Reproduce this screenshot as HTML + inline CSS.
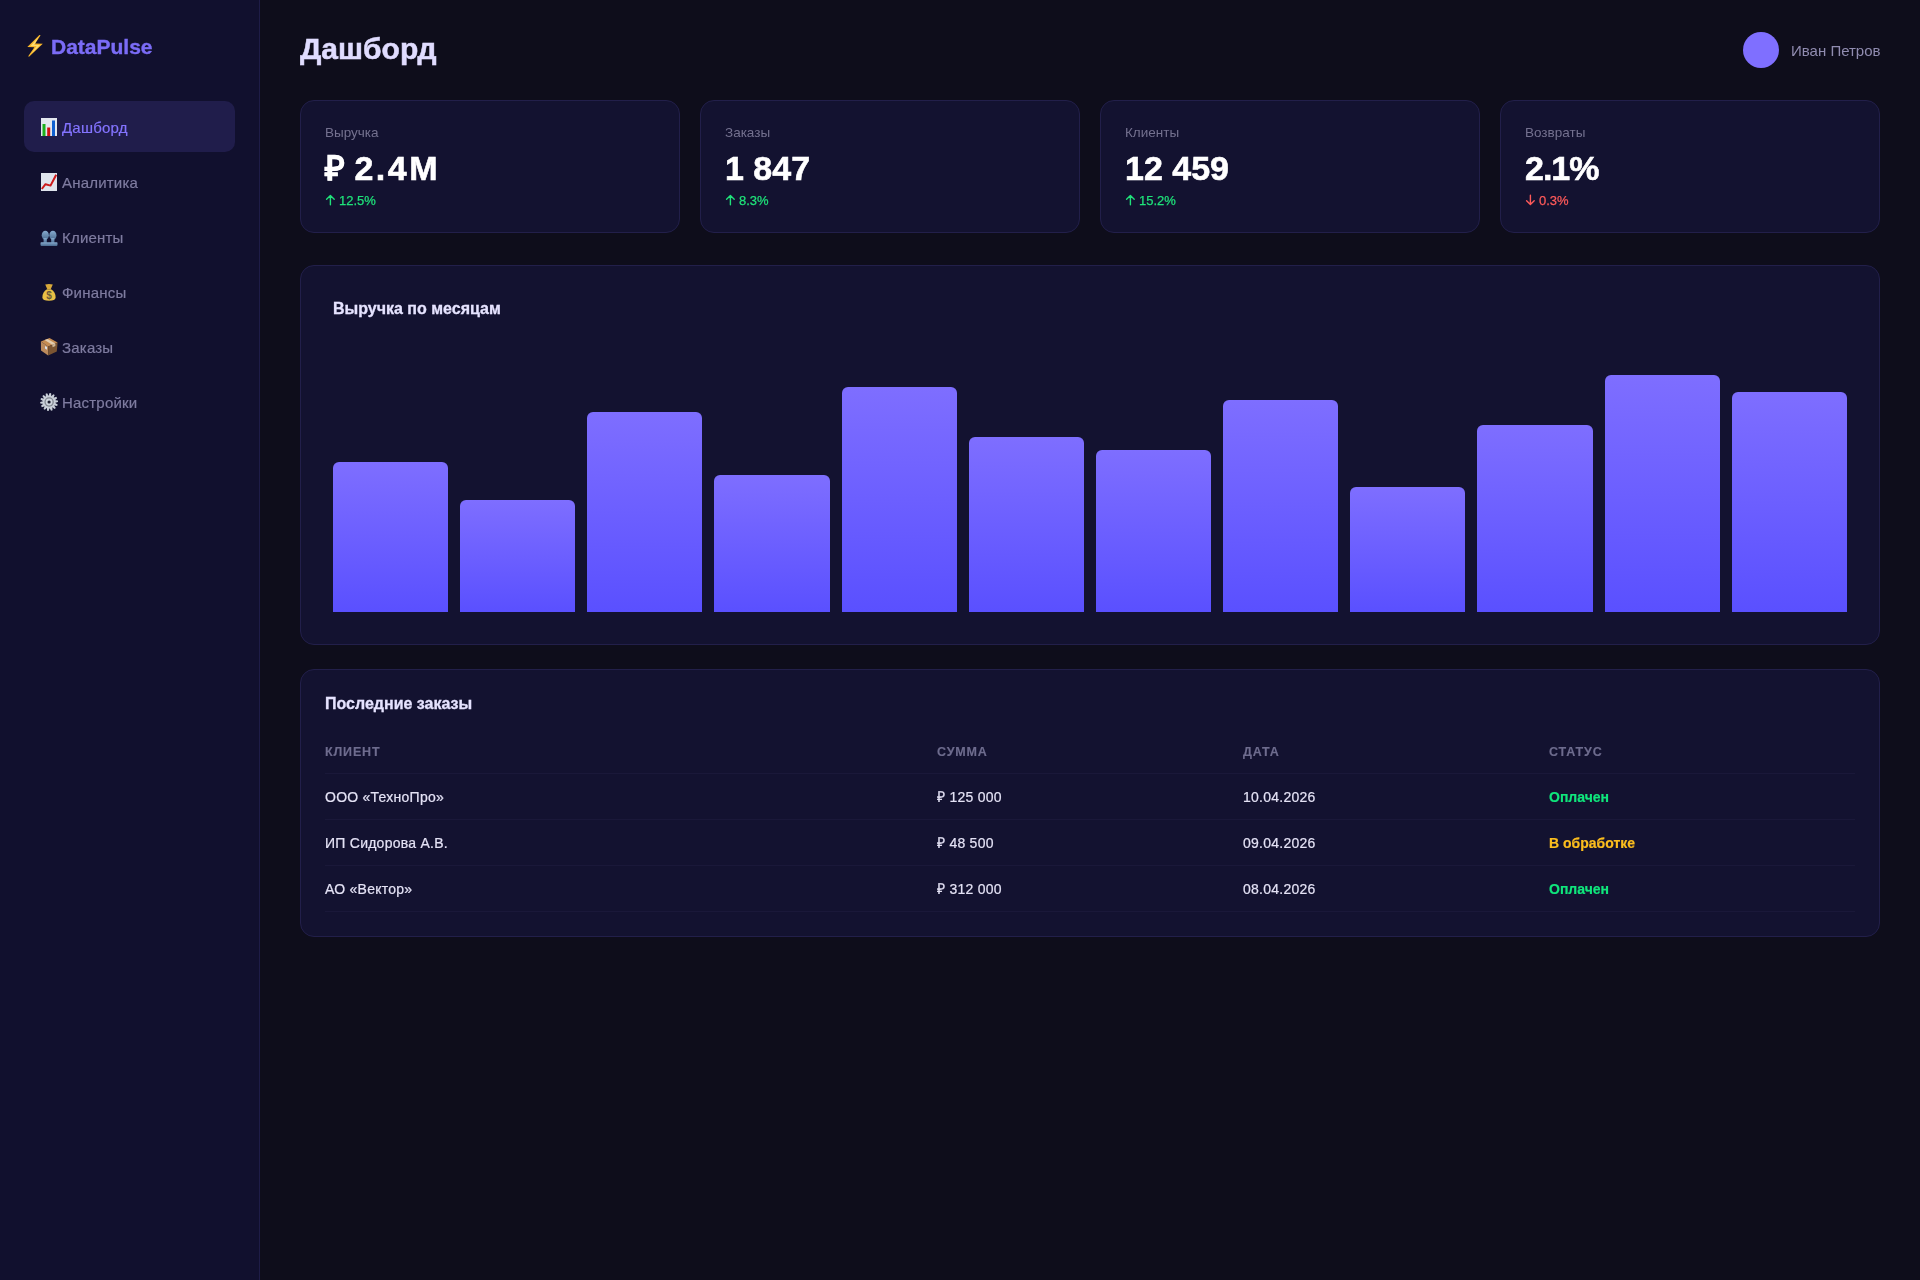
<!DOCTYPE html>
<html lang="ru">
<head>
<meta charset="utf-8">
<style>
*{box-sizing:border-box;margin:0;padding:0}
html,body{width:1920px;height:1280px;overflow:hidden}
body{background:#0e0d1b;font-family:"Liberation Sans",sans-serif;color:#e4e2f5;position:relative}
.t{position:absolute;white-space:nowrap;line-height:1;will-change:transform}
.sidebar{position:absolute;left:0;top:0;width:260px;height:1280px;background:#11102e;border-right:1px solid #1e1c47}
.active{position:absolute;left:24px;top:101px;width:211px;height:51px;border-radius:10px;background:#201d4b}
.nav{font-size:15px;color:#7f7ca0;left:62px;letter-spacing:0.2px;-webkit-text-stroke:0.2px #7f7ca0}
.ico{position:absolute}
.card{position:absolute;background:#131230;border:1px solid #221f4a;border-radius:14px}
.stat{top:100px;width:380px;height:133px}
.lbl{font-size:13.5px;color:#74718f;left:24px;top:25.4px}
.val{font-size:34px;font-weight:bold;color:#fff;-webkit-text-stroke:0.6px #fff;left:24px;top:50.2px}
.chg{font-size:13px;color:#1fe27a;-webkit-text-stroke:0.25px #1fe27a;left:37.5px;top:92.6px}
.arr{position:absolute;left:24px;top:93px}
.neg{color:#ff5a5a;-webkit-text-stroke:0.25px #ff5a5a}
.bars{position:absolute;left:0;bottom:32px;width:1578px;height:250px}
.bar{position:absolute;bottom:0;border-radius:6px 6px 0 0;background:linear-gradient(180deg,#7e6eff,#5a50ff)}
.h2{font-size:16px;font-weight:bold;color:#e6e3ff;-webkit-text-stroke:0.3px #e6e3ff}
.th{font-size:12.5px;font-weight:bold;letter-spacing:0.85px;color:#6e6c8e;-webkit-text-stroke:0.15px #6e6c8e}
.td{font-size:14px;color:#e4e2f5;letter-spacing:0.25px;-webkit-text-stroke:0.2px #e4e2f5;transform:scaleY(1.08);transform-origin:0 11.85px}
.line{position:absolute;left:24px;width:1530px;height:1px;background:#1a1839}
.ok{color:#10e67c;-webkit-text-stroke:0.2px #10e67c;font-weight:bold;letter-spacing:0}
.wait{color:#fbbd1e;-webkit-text-stroke:0.2px #fbbd1e;font-weight:bold;letter-spacing:0}
</style>
</head>
<body>
<div class="sidebar">
  <svg class="ico" style="left:24px;top:32px" width="24" height="28" viewBox="24 32 24 28">
    <defs><linearGradient id="bg1" x1="0" y1="0" x2="1" y2="0"><stop offset="0" stop-color="#f59e0b"/><stop offset="0.5" stop-color="#ffe680"/><stop offset="1" stop-color="#f59e0b"/></linearGradient></defs>
    <path d="M39.4 34.9 L40.6 35.3 L35.2 43.5 L42.8 43.7 L29 56.8 L28.2 56.3 L34.4 47.3 L27.3 47.1 Z" fill="#f8b62a"/>
    <path d="M38.6 37 L30.5 46 L36.6 46.1 L31.5 53.6 L40.2 45 L34.2 45 Z" fill="#ffea8a" opacity="0.75"/>
  </svg>
  <div class="t" style="left:51px;top:36.2px;font-size:21px;font-weight:bold;color:#7b6cf6;-webkit-text-stroke:0.4px #7b6cf6">DataPulse</div>
  <div class="active"></div>
  <!-- 📊 -->
  <svg class="ico" style="left:41px;top:118px" width="16" height="18" viewBox="0 0 16 18">
    <rect x="0" y="0" width="16" height="18" fill="#e3e7ee"/>
    <rect x="1.5" y="6" width="3" height="12" fill="#1cb01c"/>
    <rect x="6.2" y="9.5" width="3" height="8.5" fill="#d01010"/>
    <rect x="11" y="2.5" width="3" height="15.5" fill="#1060d0"/>
  </svg>
  <div class="t nav" style="top:120.0px;color:#8474ff;-webkit-text-stroke-color:#8474ff">Дашборд</div>
  <!-- 📈 -->
  <svg class="ico" style="left:41px;top:173px" width="16" height="18" viewBox="0 0 16 18">
    <rect x="0" y="0" width="16" height="18" fill="#dfe4ec"/>
    <polyline points="0.8,16 4.5,11.2 9.5,12.6 15.2,1.8" fill="none" stroke="#cc1a1a" stroke-width="2" stroke-linejoin="round"/>
  </svg>
  <div class="t nav" style="top:175.0px">Аналитика</div>
  <!-- 👥 -->
  <svg class="ico" style="left:40px;top:229px" width="18" height="18" viewBox="0 0 18 18">
    <defs><linearGradient id="pg" x1="0" y1="0" x2="0" y2="1"><stop offset="0" stop-color="#86aacd"/><stop offset="1" stop-color="#4a6b90"/></linearGradient></defs>
    <g fill="url(#pg)">
      <ellipse cx="5.3" cy="6.3" rx="3.6" ry="4.6"/>
      <ellipse cx="12.9" cy="6.3" rx="3.6" ry="4.6"/>
      <rect x="3.6" y="9" width="3.2" height="5"/>
      <rect x="11.2" y="9" width="3.2" height="5"/>
      <rect x="0.5" y="13.3" width="17" height="3.6" rx="0.8"/>
    </g>
  </svg>
  <div class="t nav" style="top:230.0px">Клиенты</div>
  <!-- 💰 -->
  <svg class="ico" style="left:42px;top:283px" width="14" height="19" viewBox="0 0 14 19">
    <path d="M3.2 1.6 Q7 0.6 10.8 1.6 L8.8 6 L5.2 6 Z" fill="#d9a93a"/>
    <path d="M5 6.2 L9 6.2 Q13.8 9 13.6 14.5 Q13.4 17.8 7 17.8 Q0.6 17.8 0.4 14.5 Q0.2 9 5 6.2 Z" fill="#e8bf45"/>
    <text x="7" y="15.6" font-family="Liberation Sans" font-weight="bold" font-size="10" text-anchor="middle" fill="#6b5a3a">$</text>
  </svg>
  <div class="t nav" style="top:285.0px">Финансы</div>
  <!-- 📦 -->
  <svg class="ico" style="left:40px;top:337px" width="18" height="20" viewBox="0 0 18 20">
    <path d="M0.9 4.4 L9.5 1 L17.6 5.5 L8.2 9.5 Z" fill="#c58c52"/>
    <path d="M0.9 4.4 L8.2 9.5 L8.2 18.6 L1 13.6 Z" fill="#bb8a5c"/>
    <path d="M8.2 9.5 L17.6 5.5 L16.8 14.5 L8.2 18.6 Z" fill="#7b5532"/>
    <path d="M4.6 3 L7.6 1.9 L15.4 6.5 L12.3 7.8 Z" fill="#e3cdb0"/>
    <path d="M12.3 7.8 L15.4 6.5 L15.4 9 L12.6 10.3 Z" fill="#cdb699"/>
    <path d="M5 9 L7 10 L7 12.8 L5 11.6 Z" fill="#dde2ea"/>
  </svg>
  <div class="t nav" style="top:340.0px">Заказы</div>
  <!-- ⚙️ -->
  <svg class="ico" style="left:40px;top:393px" width="18" height="18" viewBox="0 0 18 18">
    <g transform="translate(9.1 9)">
      <g fill="#c9cfd8">
        <circle r="6.2"/>
        <path d="M-1.5 -5.2 L-0.8 -8.9 L0.8 -8.9 L1.5 -5.2 Z" transform="rotate(8.0)"/>
        <path d="M-1.5 -5.2 L-0.8 -8.9 L0.8 -8.9 L1.5 -5.2 Z" transform="rotate(33.7)"/>
        <path d="M-1.5 -5.2 L-0.8 -8.9 L0.8 -8.9 L1.5 -5.2 Z" transform="rotate(59.4)"/>
        <path d="M-1.5 -5.2 L-0.8 -8.9 L0.8 -8.9 L1.5 -5.2 Z" transform="rotate(85.1)"/>
        <path d="M-1.5 -5.2 L-0.8 -8.9 L0.8 -8.9 L1.5 -5.2 Z" transform="rotate(110.9)"/>
        <path d="M-1.5 -5.2 L-0.8 -8.9 L0.8 -8.9 L1.5 -5.2 Z" transform="rotate(136.6)"/>
        <path d="M-1.5 -5.2 L-0.8 -8.9 L0.8 -8.9 L1.5 -5.2 Z" transform="rotate(162.3)"/>
        <path d="M-1.5 -5.2 L-0.8 -8.9 L0.8 -8.9 L1.5 -5.2 Z" transform="rotate(188.0)"/>
        <path d="M-1.5 -5.2 L-0.8 -8.9 L0.8 -8.9 L1.5 -5.2 Z" transform="rotate(213.7)"/>
        <path d="M-1.5 -5.2 L-0.8 -8.9 L0.8 -8.9 L1.5 -5.2 Z" transform="rotate(239.4)"/>
        <path d="M-1.5 -5.2 L-0.8 -8.9 L0.8 -8.9 L1.5 -5.2 Z" transform="rotate(265.1)"/>
        <path d="M-1.5 -5.2 L-0.8 -8.9 L0.8 -8.9 L1.5 -5.2 Z" transform="rotate(290.9)"/>
        <path d="M-1.5 -5.2 L-0.8 -8.9 L0.8 -8.9 L1.5 -5.2 Z" transform="rotate(316.6)"/>
        <path d="M-1.5 -5.2 L-0.8 -8.9 L0.8 -8.9 L1.5 -5.2 Z" transform="rotate(342.3)"/>
      </g>
      <circle r="4.7" fill="#80868f"/>
      <circle r="3.4" fill="#cfd5dd"/>
      <circle r="1.6" fill="#1c1d2e"/>
    </g>
  </svg>
  <div class="t nav" style="top:395.0px">Настройки</div>
</div>

<div class="t" style="left:300px;top:34.2px;font-size:30px;font-weight:bold;color:#e0dcff;-webkit-text-stroke:0.5px #e0dcff">Дашборд</div>
<div style="position:absolute;left:1743px;top:32px;width:36px;height:36px;border-radius:50%;background:#7f6fff"></div>
<div class="t" style="left:1791px;top:42.6px;font-size:15px;color:#908cb0">Иван Петров</div>

<div class="card stat" style="left:300px"><div class="t lbl">Выручка</div><div class="t val">₽ <span style="letter-spacing:2.5px">2.4M</span></div><svg class="arr" width="11" height="12" viewBox="0 0 11 12"><path d="M5.4 1.6V10.7M1.6 5.2L5.4 1.5L9.2 5.2" fill="none" stroke="#1fe27a" stroke-width="1.4" stroke-linecap="round" stroke-linejoin="round"/></svg><div class="t chg">12.5%</div></div>
<div class="card stat" style="left:700px"><div class="t lbl">Заказы</div><div class="t val">1 847</div><svg class="arr" width="11" height="12" viewBox="0 0 11 12"><path d="M5.4 1.6V10.7M1.6 5.2L5.4 1.5L9.2 5.2" fill="none" stroke="#1fe27a" stroke-width="1.4" stroke-linecap="round" stroke-linejoin="round"/></svg><div class="t chg">8.3%</div></div>
<div class="card stat" style="left:1100px"><div class="t lbl">Клиенты</div><div class="t val">12 459</div><svg class="arr" width="11" height="12" viewBox="0 0 11 12"><path d="M5.4 1.6V10.7M1.6 5.2L5.4 1.5L9.2 5.2" fill="none" stroke="#1fe27a" stroke-width="1.4" stroke-linecap="round" stroke-linejoin="round"/></svg><div class="t chg">15.2%</div></div>
<div class="card stat" style="left:1500px"><div class="t lbl">Возвраты</div><div class="t val" style="letter-spacing:-1px">2.1%</div><svg class="arr" width="11" height="12" viewBox="0 0 11 12"><path d="M5.4 1.3V10.4M1.6 6.8L5.4 10.5L9.2 6.8" fill="none" stroke="#ff5a5a" stroke-width="1.4" stroke-linecap="round" stroke-linejoin="round"/></svg><div class="t chg neg">0.3%</div></div>

<div class="card" style="left:300px;top:265px;width:1580px;height:380px">
  <div class="t h2" style="left:32px;top:34.5px">Выручка по месяцам</div>
  <div class="bars">
    <div class="bar" style="left:31.98px;width:115.167px;height:150.0px"></div>
    <div class="bar" style="left:159.15px;width:115.167px;height:112.5px"></div>
    <div class="bar" style="left:286.31px;width:115.167px;height:200.0px"></div>
    <div class="bar" style="left:413.48px;width:115.167px;height:137.5px"></div>
    <div class="bar" style="left:540.65px;width:115.167px;height:225.0px"></div>
    <div class="bar" style="left:667.81px;width:115.167px;height:175.0px"></div>
    <div class="bar" style="left:794.98px;width:115.167px;height:162.5px"></div>
    <div class="bar" style="left:922.15px;width:115.167px;height:212.5px"></div>
    <div class="bar" style="left:1049.31px;width:115.167px;height:125.0px"></div>
    <div class="bar" style="left:1176.48px;width:115.167px;height:187.5px"></div>
    <div class="bar" style="left:1303.65px;width:115.167px;height:237.5px"></div>
    <div class="bar" style="left:1430.81px;width:115.167px;height:220.0px"></div>
  </div>
</div>

<div class="card" style="left:300px;top:669px;width:1580px;height:268px">
  <div class="t h2" style="left:24px;top:26.4px">Последние заказы</div>
  <div class="t th" style="left:24px;top:76.2px">КЛИЕНТ</div>
  <div class="t th" style="left:636px;top:76.2px">СУММА</div>
  <div class="t th" style="left:942px;top:76.2px">ДАТА</div>
  <div class="t th" style="left:1248px;top:76.2px">СТАТУС</div>
  <div class="line" style="top:103px"></div>

  <div class="t td" style="left:24px;top:120.2px">ООО «ТехноПро»</div>
  <div class="t td" style="left:636px;top:120.2px">₽ 125 000</div>
  <div class="t td" style="left:942px;top:120.2px">10.04.2026</div>
  <div class="t td ok" style="left:1248px;top:120.2px">Оплачен</div>
  <div class="line" style="top:149px"></div>

  <div class="t td" style="left:24px;top:166.2px">ИП Сидорова А.В.</div>
  <div class="t td" style="left:636px;top:166.2px">₽ 48 500</div>
  <div class="t td" style="left:942px;top:166.2px">09.04.2026</div>
  <div class="t td wait" style="left:1248px;top:166.2px">В обработке</div>
  <div class="line" style="top:195px"></div>

  <div class="t td" style="left:24px;top:212.2px">АО «Вектор»</div>
  <div class="t td" style="left:636px;top:212.2px">₽ 312 000</div>
  <div class="t td" style="left:942px;top:212.2px">08.04.2026</div>
  <div class="t td ok" style="left:1248px;top:212.2px">Оплачен</div>
  <div class="line" style="top:241px"></div>
</div>
</body>
</html>
